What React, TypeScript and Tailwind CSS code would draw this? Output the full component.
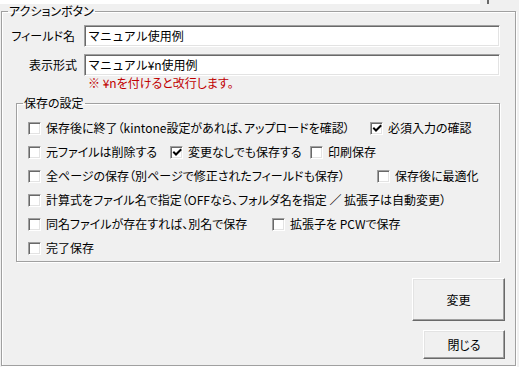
import React from 'react'

const font = "font-['Noto_Sans_CJK_JP',sans-serif] [font-feature-settings:'palt']"

function CheckBox({ label, checked = false, width }: { label: string; checked?: boolean; width?: string }) {
  return (
    <div className={`flex items-center h-full ${width ?? ''}`}>
      <div className="relative h-[13px] w-[13px] shrink-0 bg-white border-t border-l border-t-[#a0a0a0] border-l-[#a0a0a0] border-b border-r border-b-white border-r-white shadow-[inset_1px_1px_0_#696969,inset_-1px_-1px_0_#e3e3e3]">
        {checked && (
          <svg className="absolute left-[1px] top-[1px]" width="11" height="11" viewBox="0 0 11 11">
            <path d="M2 4.5 L4 6.5 L8.5 2" stroke="#000" strokeWidth="2" fill="none" strokeLinecap="square" />
          </svg>
        )}
      </div>
      <span className="ml-[5px] whitespace-nowrap">{label}</span>
    </div>
  )
}

function TextInput({ value }: { value: string }) {
  return (
    <div className="h-[22px] w-[416px] bg-white border-t border-l border-t-[#a0a0a0] border-l-[#a0a0a0] border-b border-r border-b-white border-r-white shadow-[inset_1px_1px_0_#696969,inset_-1px_-1px_0_#e3e3e3] flex items-center pl-[3px] text-[12px] [font-feature-settings:normal]">
      {value}
    </div>
  )
}

function Button({ label, className }: { label: string; className: string }) {
  return (
    <button className={`flex items-center justify-center bg-[#f0f0f0] border border-t-white border-l-white border-r-[#696969] border-b-[#696969] shadow-[inset_-1px_-1px_0_#a0a0a0,inset_1px_1px_0_#e3e3e3] ${className}`}>
      {label}
    </button>
  )
}

export default function App() {
  return (
    <div className={`w-[519px] h-[367px] bg-[#f0f0f0] overflow-hidden text-[12px] leading-[14px] text-black ${font}`}>
      {/* bottom edge of the panel above */}
      <div className="flex h-[4px]">
        <div className="w-[480px] bg-white" />
        <div className="ml-[7px] w-[2px] bg-[#696969]" />
      </div>

      <fieldset className="ml-[1px] w-[515px] h-[362px] border border-[#a0a0a0] shadow-[inset_1px_1px_0_#fff,1px_1px_0_#fff]">
        <legend className="ml-[6px] px-[1px] leading-[14px]">アクションボタン</legend>

        <div className="mt-[7px] flex items-center">
          <div className="w-[73px] text-right">フィールド名</div>
          <div className="ml-[9px]">
            <TextInput value="マニュアル使用例" />
          </div>
        </div>
        <div className="mt-[7px] flex items-center">
          <div className="w-[75px] text-right">表示形式</div>
          <div className="ml-[7px]">
            <TextInput value="マニュアル¥n使用例" />
          </div>
        </div>
        <div className="mt-0 pl-[86px] h-[14px] text-[#c00000]">※ ¥nを付けると改行します。</div>

        <fieldset className="mt-[6px] ml-[14px] w-[484px] h-[166px] border border-[#a0a0a0] shadow-[inset_1px_1px_0_#fff,1px_1px_0_#fff]">
          <legend className="ml-[6px] px-[1px] leading-[14px]">保存の設定</legend>
          <div className="mt-[6px] pl-[11px] flex flex-col">
            <div className="flex h-[24px]">
              <CheckBox width="w-[342px]" label="保存後に終了（kintone設定があれば、アップロードを確認）" />
              <CheckBox checked label="必須入力の確認" />
            </div>
            <div className="flex h-[24px]">
              <CheckBox width="w-[142px]" label="元ファイルは削除する" />
              <CheckBox width="w-[140px]" checked label="変更なしでも保存する" />
              <CheckBox label="印刷保存" />
            </div>
            <div className="flex h-[24px]">
              <CheckBox width="w-[349px]" label="全ページの保存（別ページで修正されたフィールドも保存）" />
              <CheckBox label="保存後に最適化" />
            </div>
            <div className="flex h-[24px]">
              <CheckBox label="計算式をファイル名で指定（OFFなら、フォルダ名を指定 ／ 拡張子は自動変更）" />
            </div>
            <div className="flex h-[24px]">
              <CheckBox width="w-[244px]" label="同名ファイルが存在すれば、別名で保存" />
              <CheckBox label="拡張子を PCWで保存" />
            </div>
            <div className="flex h-[24px]">
              <CheckBox label="完了保存" />
            </div>
          </div>
        </fieldset>

        <div className="mt-[16px] mr-[10px] flex flex-col items-end">
          <Button label="変更" className="w-[93px] h-[43px]" />
          <Button label="閉じる" className="mt-[9px] w-[82px] h-[29px]" />
        </div>
      </fieldset>
    </div>
  )
}
